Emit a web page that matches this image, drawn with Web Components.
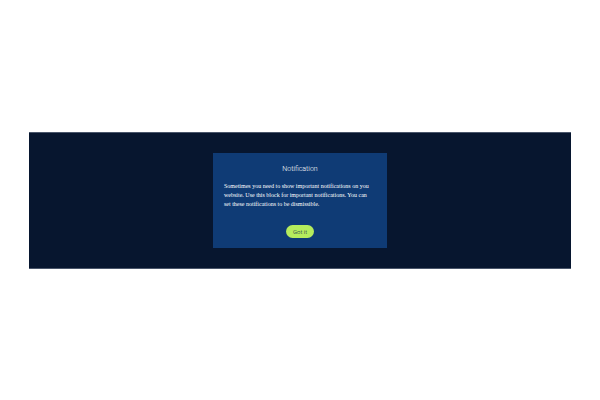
<!DOCTYPE html>
<html lang="en">
<head>
<meta charset="utf-8">
<title>Notification</title>
<style>
body { margin: 0; min-height: 100vh; display: grid; align-items: center; background: #fff; }
</style>
</head>
<body>
<notice-band>
  <notice-card>
    <span slot="title">Notification</span>
    Sometimes you need to show important notifications on you website. Use this block for important notifications. You can set these notifications to be dismissible.
    <pill-button slot="action">Got it</pill-button>
  </notice-card>
</notice-band>
<script>
class Base extends HTMLElement {
  constructor() {
    super();
    this.attachShadow({ mode: "open" }).innerHTML = this.constructor.markup;
  }
}
customElements.define("notice-band", class extends Base {
  static markup = `<style>
    :host { display: flex; justify-content: center; margin: 0 29px; padding: 20px 16px; background: #07162f; border: solid #4a566b; border-width: 1px 0; }
  </style><slot></slot>`;
});
customElements.define("notice-card", class extends Base {
  static markup = `<style>
    :host { display: block; width: 100%; max-width: 174px; box-sizing: border-box; padding: 10px 14px 10px 11px; background: #0f3b75; color: #fff; }
    h2 { margin: 0 -3px 7px 0; font: 300 7px/12px Roboto, sans-serif; text-align: center; }
    p { margin: 0 0 16px; font: 6px/9px "Liberation Serif", serif; }
    footer { margin-right: -3px; }
  </style>
  <h2><slot name="title"></slot></h2>
  <p><slot></slot></p>
  <footer><slot name="action"></slot></footer>`;
});
customElements.define("pill-button", class extends Base {
  static markup = `<style>
    :host { display: flex; justify-content: center; }
    button { border: 0; border-radius: 7px; padding: 2px 7px; background: #b5ec5d; color: #0a2348; font: 300 6px/9px Roboto, sans-serif; }
  </style>
  <button type="button"><slot></slot></button>`;
});
</script>
</body>
</html>
